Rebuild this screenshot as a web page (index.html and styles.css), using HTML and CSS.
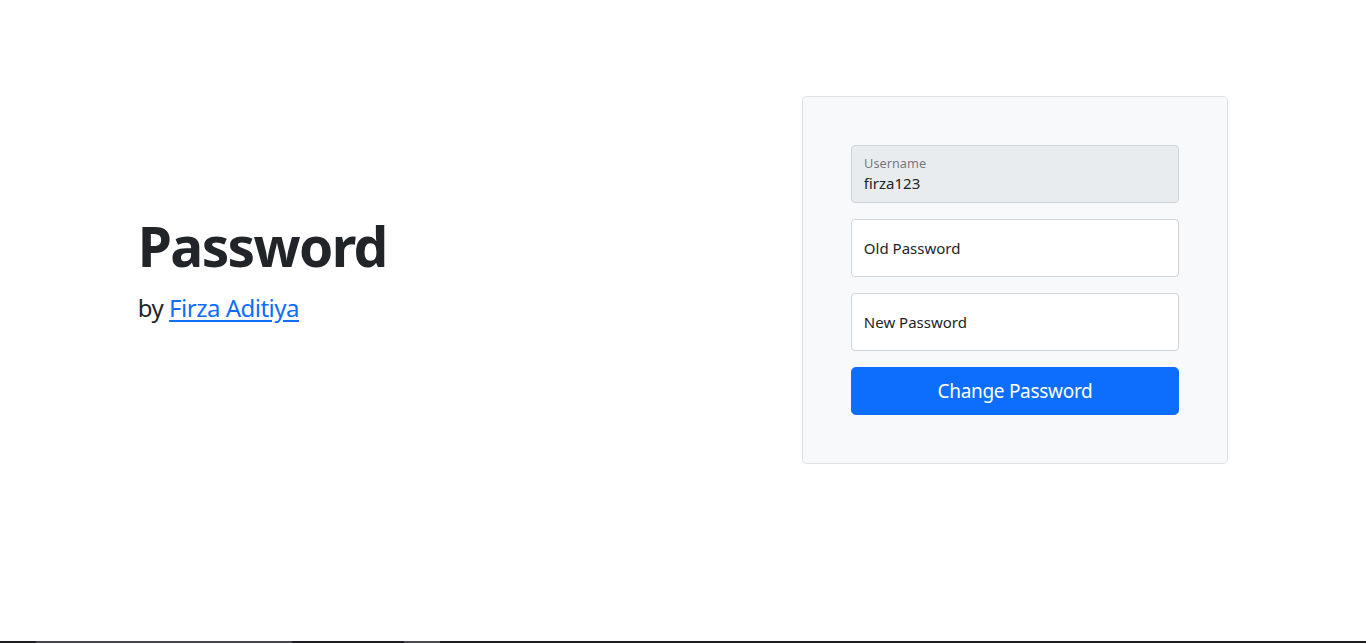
FILE: index.html
```html
<!DOCTYPE html>
<html lang="en">
<head>
<meta charset="utf-8">
<title>Change Password</title>
<link rel="stylesheet" href="styles.css">
</head>
<body>
<div class="container">
  <div class="row">
    <div class="col-intro">
      <h1 class="title">Password</h1>
      <p class="byline">by <a href="#">Firza Aditiya</a></p>
    </div>
    <div class="col-form">
      <form class="card">
        <div class="floating">
          <input class="field field-disabled" type="text" id="username" value="firza123" placeholder="Username" disabled>
          <label for="username">Username</label>
        </div>
        <div class="floating">
          <input class="field" type="password" id="oldpw" placeholder="Old Password">
          <label for="oldpw">Old Password</label>
        </div>
        <div class="floating">
          <input class="field" type="password" id="newpw" placeholder="New Password">
          <label for="newpw">New Password</label>
        </div>
        <button class="btn-primary" type="submit">Change Password</button>
      </form>
    </div>
  </div>
</div>
<div class="taskbar"><span class="tb-a"></span><span class="tb-b"></span><span class="tb-c"></span><span class="tb-d"></span><span class="tb-e"></span></div>
</body>
</html>
```
FILE: styles.css
```css
* { box-sizing: border-box; }
html, body { margin: 0; padding: 0; }
body {
  font-family: "Noto Sans", "Open Sans", sans-serif;
  font-size: 16px;
  line-height: 1.5;
  color: #212529;
  background: #fff;
  overflow: hidden;
}
.container {
  width: 83.3333%;
  max-width: 1140px;
  margin: 0 auto;
  padding: 48px 24px;
}
.row {
  display: flex;
  align-items: center;
  margin: 0 -24px;
  padding: 48px 0;
}
.col-intro {
  flex: 0 0 58.3333%;
  padding: 0 24px;
}
.col-form {
  flex: 0 0 41.6667%;
  padding: 0 24px;
}
.title {
  margin: 0 0 16px;
  font-size: 55px;
  font-weight: 700;
  line-height: 56px;
  letter-spacing: -1.65px;
}
.byline {
  margin: 0 0 16px;
  font-size: 24px;
  line-height: 1.5;
  letter-spacing: -0.5px;
}
.byline a { color: #0d6efd; text-decoration: underline; text-underline-offset: 3px; }
.card {
  background: #f8f9fa;
  border: 1px solid #dee2e6;
  border-radius: 4.8px;
  padding: 48px;
  margin: 0;
}
.floating {
  position: relative;
  margin-bottom: 16px;
}
.field {
  display: block;
  width: 100%;
  height: 58px;
  padding: 27px 12px 9px;
  font-family: inherit;
  font-size: 15px;
  line-height: 1.25;
  color: #212529;
  background: #fff;
  border: 1px solid #ced4da;
  border-radius: 4px;
  outline: none;
}
.field::placeholder { color: transparent; }
.field-disabled { background: #e9ecef; opacity: 1; -webkit-text-fill-color: #212529; }
.floating label {
  position: absolute;
  top: 0;
  left: 0;
  height: 100%;
  padding: 16px 12px;
  border: 1px solid transparent;
  pointer-events: none;
  transform-origin: 0 0;
  color: #212529;
  font-size: 15px;
  line-height: 24px;
}
.field:not(:placeholder-shown) ~ label {
  color: rgba(33, 37, 41, 0.6);
  transform: scale(0.85) translateY(-8px) translateX(2.4px);
}
.btn-primary {
  display: block;
  width: 100%;
  padding: 8px 16px;
  font-family: inherit;
  font-size: 19px;
  line-height: 30px;
  letter-spacing: -0.3px;
  color: #fff;
  background: #0d6efd;
  border: 1px solid #0d6efd;
  border-radius: 4.8px;
  cursor: pointer;
}
.taskbar {
  position: fixed;
  left: 0;
  right: 0;
  bottom: 0;
  height: 2px;
  display: flex;
  background: #1e1e22;
}
.taskbar span { display: block; height: 2px; }
.tb-a { width: 36px; }
.tb-b { width: 256px; background: #46464a; }
.tb-c { width: 112px; }
.tb-d { width: 36px; background: #4a4a50; }
```
